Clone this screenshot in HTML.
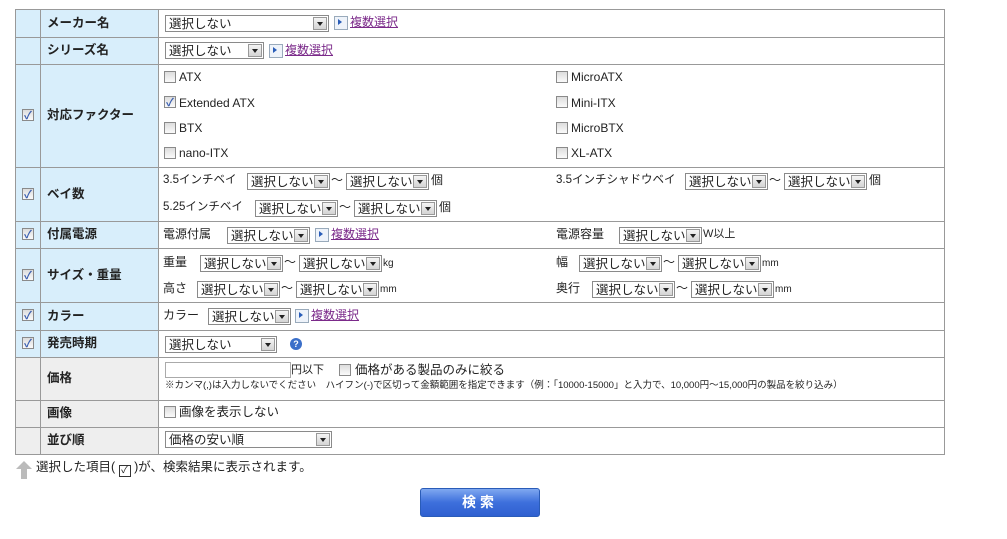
<!DOCTYPE html>
<html><head><meta charset="utf-8"><style>
*{box-sizing:border-box;margin:0;padding:0}
body{width:1007px;height:539px;background:#fff;font-family:"Liberation Sans","Noto Sans CJK JP",sans-serif;font-size:12px;color:#222;position:relative;overflow:hidden}
table{position:absolute;left:15px;top:9px;width:930px;border-collapse:collapse}
td{border:1px solid #999;padding:0;line-height:14px;vertical-align:middle}
td.c{width:25px;background:#d8eefb}
td.l{width:118px;background:#d8eefb;font-weight:bold;padding-left:6px;font-size:12.5px;padding-bottom:2px}
tr.g td.c,tr.g td.l{background:#eeeeee}
.a{position:absolute;white-space:nowrap;line-height:16px}
.s{position:absolute;height:17px;border:1px solid #8a8a8a;background:#fff;line-height:16px;padding-left:3px;font-size:12.5px;white-space:nowrap}
.s i{position:absolute;right:1px;top:1px;width:14px;height:13px;background:linear-gradient(#f4f4f4,#d4d4d4);border:1px solid #999}
.s i:after{content:"";position:absolute;left:3px;top:4px;border-left:3px solid transparent;border-right:3px solid transparent;border-top:4px solid #222}
.cb{position:absolute;width:12px;height:12px;border:1px solid #8a8a8a;background:linear-gradient(#ddd,#fafafa)}
.cb.k:after{content:"✓";position:absolute;left:1px;top:-3px;font-size:11px;color:#3a5fb0;font-weight:bold}
.ln{position:absolute;white-space:nowrap;color:#7b2a8a;text-decoration:underline;line-height:16px;padding-left:16px}
.ln:before{content:"";position:absolute;left:0;top:2px;width:12px;height:12px;border:1px solid #9ab;background:#eef3fa}
.ln:after{content:"";position:absolute;left:4px;top:5px;border-top:3px solid transparent;border-bottom:3px solid transparent;border-left:4px solid #2a5db8}
</style></head><body>
<table>
<tr style="height:28px"><td class="c"></td><td class="l">メーカー名</td><td></td></tr>
<tr style="height:27px"><td class="c"></td><td class="l">シリーズ名</td><td></td></tr>
<tr style="height:103px"><td class="c"></td><td class="l">対応ファクター</td><td></td></tr>
<tr style="height:54px"><td class="c"></td><td class="l">ベイ数</td><td></td></tr>
<tr style="height:27px"><td class="c"></td><td class="l">付属電源</td><td></td></tr>
<tr style="height:54px"><td class="c"></td><td class="l">サイズ・重量</td><td></td></tr>
<tr style="height:28px"><td class="c"></td><td class="l">カラー</td><td></td></tr>
<tr style="height:27px"><td class="c"></td><td class="l">発売時期</td><td></td></tr>
<tr class="g" style="height:43px"><td class="c"></td><td class="l">価格</td><td></td></tr>
<tr class="g" style="height:27px"><td class="c"></td><td class="l">画像</td><td></td></tr>
<tr class="g" style="height:27px"><td class="c"></td><td class="l">並び順</td><td></td></tr>
</table>
<div class="cb k" style="left:22px;top:109px"></div>
<div class="cb k" style="left:22px;top:188px"></div>
<div class="cb k" style="left:22px;top:228px"></div>
<div class="cb k" style="left:22px;top:269px"></div>
<div class="cb k" style="left:22px;top:309px"></div>
<div class="cb k" style="left:22px;top:337px"></div>

<div class="s" style="left:165px;top:15px;width:164px">選択しない<i></i></div>
<div class="ln" style="left:334px;top:14px">複数選択</div>
<div class="s" style="left:165px;top:42px;width:99px">選択しない<i></i></div>
<div class="ln" style="left:269px;top:42px">複数選択</div>

<div class="cb" style="left:164px;top:71px"></div><div class="a" style="left:179px;top:69px">ATX</div>
<div class="cb k" style="left:164px;top:96px"></div><div class="a" style="left:179px;top:95px">Extended ATX</div>
<div class="cb" style="left:164px;top:122px"></div><div class="a" style="left:179px;top:120px">BTX</div>
<div class="cb" style="left:164px;top:147px"></div><div class="a" style="left:179px;top:145px">nano-ITX</div>
<div class="cb" style="left:556px;top:71px"></div><div class="a" style="left:571px;top:69px">MicroATX</div>
<div class="cb" style="left:556px;top:96px"></div><div class="a" style="left:571px;top:95px">Mini-ITX</div>
<div class="cb" style="left:556px;top:122px"></div><div class="a" style="left:571px;top:120px">MicroBTX</div>
<div class="cb" style="left:556px;top:147px"></div><div class="a" style="left:571px;top:145px">XL-ATX</div>

<div class="a" style="left:163px;top:172px;font-size:11.5px">3.5インチベイ</div>
<div class="s" style="left:247px;top:173px;width:83px">選択しない<i></i></div><div class="a" style="left:331px;top:172px">～</div>
<div class="s" style="left:346px;top:173px;width:83px">選択しない<i></i></div><div class="a" style="left:431px;top:172px">個</div>
<div class="a" style="left:163px;top:199px;font-size:11.5px">5.25インチベイ</div>
<div class="s" style="left:255px;top:200px;width:83px">選択しない<i></i></div><div class="a" style="left:339px;top:199px">～</div>
<div class="s" style="left:354px;top:200px;width:83px">選択しない<i></i></div><div class="a" style="left:439px;top:199px">個</div>
<div class="a" style="left:556px;top:172px;font-size:11.5px">3.5インチシャドウベイ</div>
<div class="s" style="left:685px;top:173px;width:83px">選択しない<i></i></div><div class="a" style="left:769px;top:172px">～</div>
<div class="s" style="left:784px;top:173px;width:83px">選択しない<i></i></div><div class="a" style="left:869px;top:172px">個</div>

<div class="a" style="left:163px;top:226px">電源付属</div>
<div class="s" style="left:227px;top:227px;width:83px">選択しない<i></i></div>
<div class="ln" style="left:315px;top:226px">複数選択</div>
<div class="a" style="left:556px;top:226px">電源容量</div>
<div class="s" style="left:619px;top:227px;width:83px">選択しない<i></i></div><div class="a" style="left:703px;top:226px;font-size:11px">W以上</div>

<div class="a" style="left:163px;top:254px">重量</div>
<div class="s" style="left:200px;top:255px;width:83px">選択しない<i></i></div><div class="a" style="left:284px;top:254px">～</div>
<div class="s" style="left:299px;top:255px;width:83px">選択しない<i></i></div><div class="a" style="left:383px;top:256px;font-size:10px">kg</div>
<div class="a" style="left:163px;top:280px">高さ</div>
<div class="s" style="left:197px;top:281px;width:83px">選択しない<i></i></div><div class="a" style="left:281px;top:280px">～</div>
<div class="s" style="left:296px;top:281px;width:83px">選択しない<i></i></div><div class="a" style="left:380px;top:282px;font-size:10px">mm</div>
<div class="a" style="left:556px;top:254px">幅</div>
<div class="s" style="left:579px;top:255px;width:83px">選択しない<i></i></div><div class="a" style="left:663px;top:254px">～</div>
<div class="s" style="left:678px;top:255px;width:83px">選択しない<i></i></div><div class="a" style="left:762px;top:256px;font-size:10px">mm</div>
<div class="a" style="left:556px;top:280px">奥行</div>
<div class="s" style="left:592px;top:281px;width:83px">選択しない<i></i></div><div class="a" style="left:676px;top:280px">～</div>
<div class="s" style="left:691px;top:281px;width:83px">選択しない<i></i></div><div class="a" style="left:775px;top:282px;font-size:10px">mm</div>

<div class="a" style="left:163px;top:307px">カラー</div>
<div class="s" style="left:208px;top:308px;width:83px">選択しない<i></i></div>
<div class="ln" style="left:295px;top:307px">複数選択</div>

<div class="s" style="left:165px;top:336px;width:112px">選択しない<i></i></div>
<div style="position:absolute;left:290px;top:338px;width:12px;height:12px;border-radius:50%;background:#3b6fc9;color:#fff;font-size:9px;font-weight:bold;text-align:center;line-height:12px">?</div>

<div style="position:absolute;left:165px;top:362px;width:126px;height:16px;border:1px solid #aaa;background:#fff"></div>
<div class="a" style="left:291px;top:362px;font-size:11px">円以下</div>
<div class="cb" style="left:339px;top:364px"></div><div class="a" style="left:355px;top:362px;font-size:12.5px">価格がある製品のみに絞る</div>
<div class="a" style="left:165px;top:378px;font-size:9.5px">※カンマ(,)は入力しないでください　ハイフン(-)で区切って金額範囲を指定できます（例：「10000-15000」と入力で、10,000円～15,000円の製品を絞り込み）</div>

<div class="cb" style="left:164px;top:406px"></div><div class="a" style="left:179px;top:404px;font-size:12.5px">画像を表示しない</div>
<div class="s" style="left:165px;top:431px;width:167px">価格の安い順<i></i></div>

<svg style="position:absolute;left:15px;top:460px" width="18" height="20"><path d="M9 1 L17 9 H12 V19 H6 V9 H1 Z" fill="#bbb"/></svg>
<div class="a" style="left:36px;top:459px;font-size:12.5px">選択した項目( <span style="display:inline-block;width:12px;height:12px;border:1px solid #333;vertical-align:-2px;font-size:10px;line-height:10px;text-align:center">✓</span> )が、検索結果に表示されます。</div>

<div style="position:absolute;left:420px;top:488px;width:120px;height:29px;border:1px solid #2a5cb8;border-radius:3px;background:linear-gradient(#7fa8f0,#3d6fdc 50%,#2f60d0);color:#fff;font-weight:bold;font-size:14px;text-align:center;line-height:27px;letter-spacing:4px">検索</div>
</body></html>
